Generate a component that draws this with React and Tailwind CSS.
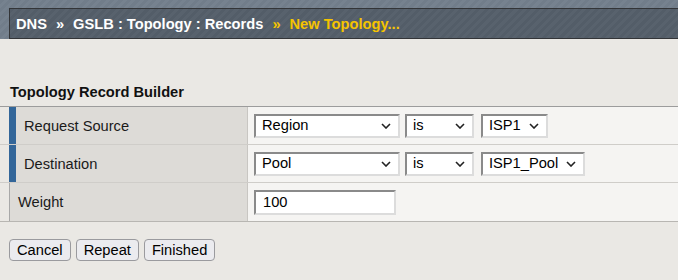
import React from 'react';

const font = "font-['Liberation_Sans',Arial,sans-serif]";

const Chevron = () => (
  <svg width="10" height="6" viewBox="0 0 10 6" className="shrink-0">
    <path d="M1 1 L5 5 L9 1" fill="none" stroke="#222" strokeWidth="1.6" />
  </svg>
);

const FakeSelect = ({ value, width, className = '' }) => (
  <div
    className={`flex h-[24px] items-center justify-between border-2 border-t-[#8a8a8a] border-l-[#8a8a8a] border-r-[#dcdcdc] border-b-[#dcdcdc] bg-white pl-[6px] pr-[7px] ${className}`}
    style={{ width }}
  >
    <span className="text-[14.67px] leading-none text-black">{value}</span>
    <Chevron />
  </div>
);

const rows = [
  { label: 'Request Source', accent: true, values: ['Region', 'is', 'ISP1'], widths: [146, 69, 67] },
  { label: 'Destination', accent: true, values: ['Pool', 'is', 'ISP1_Pool'], widths: [146, 69, 104] },
];

const App = () => {
  return (
    <div className={`min-h-[280px] w-full bg-[#eae8e4] ${font}`}>
      <div className="bg-[repeating-linear-gradient(135deg,#717d8a_0px,#717d8a_3px,#76828f_3px,#76828f_6px)] pt-[8px] pl-[9px]">
        <div className="flex h-[31px] items-center border-y border-l border-[#333538] bg-[repeating-linear-gradient(135deg,#535d68_0px,#535d68_3px,#58626d_3px,#58626d_6px)] pl-[6px] text-[14.67px] font-bold whitespace-nowrap">
          <span className="text-white">DNS</span>
          <span className="mx-[9px] text-white">»</span>
          <span className="text-white">GSLB : Topology : Records</span>
          <span className="mx-[9px] text-[#f5c400]">»</span>
          <span className="text-[#f5c400]">New Topology...</span>
        </div>
      </div>

      <div className="pt-[45px]">
        <h2 className="pl-[10px] text-[14.67px] leading-[17px] font-bold text-[#111]">Topology Record Builder</h2>

        <div className="mt-[5px] border-t border-[#9c9c9c]">
          {rows.map((row) => (
            <div key={row.label} className="flex h-[38px] border-b border-[#cfcdc9]">
              <div className="ml-[9px] flex w-[239px] items-center border-l-[7px] border-r border-l-[#336699] border-r-[#c8c6c2] bg-[#dddbd7] pl-[8px] text-[14.67px] text-[#1a1a1a]">
                {row.label}
              </div>
              <div className="flex flex-1 items-center bg-[#f5f4f2] pl-[6px]">
                <FakeSelect value={row.values[0]} width={row.widths[0]} />
                <FakeSelect value={row.values[1]} width={row.widths[1]} className="ml-[5px]" />
                <FakeSelect value={row.values[2]} width={row.widths[2]} className="ml-[7px]" />
              </div>
            </div>
          ))}
          <div className="flex h-[39px] border-b border-[#b8b6b2]">
            <div className="ml-[9px] flex w-[239px] items-center border-l border-r border-l-[#a8a8a8] border-r-[#c8c6c2] bg-[#dddbd7] pl-[8px] text-[14.67px] text-[#1a1a1a]">
              Weight
            </div>
            <div className="flex flex-1 items-center bg-[#f5f4f2] pl-[6px]">
              <input
                readOnly
                value="100"
                className="h-[25px] w-[142px] border-2 border-t-[#8a8a8a] border-l-[#8a8a8a] border-r-[#dcdcdc] border-b-[#dcdcdc] bg-white pl-[7px] text-[14.67px] text-black outline-none"
              />
            </div>
          </div>
        </div>

        <div className="mt-[17px] flex gap-[5px] pl-[9px]">
          {['Cancel', 'Repeat', 'Finished'].map((b) => (
            <button
              key={b}
              className="h-[22px] rounded-[4px] border border-[#9a9a9e] bg-[#ebebef] px-[7px] text-[14.67px] leading-none text-black"
            >
              {b}
            </button>
          ))}
        </div>
      </div>
    </div>
  );
};

export default App;
